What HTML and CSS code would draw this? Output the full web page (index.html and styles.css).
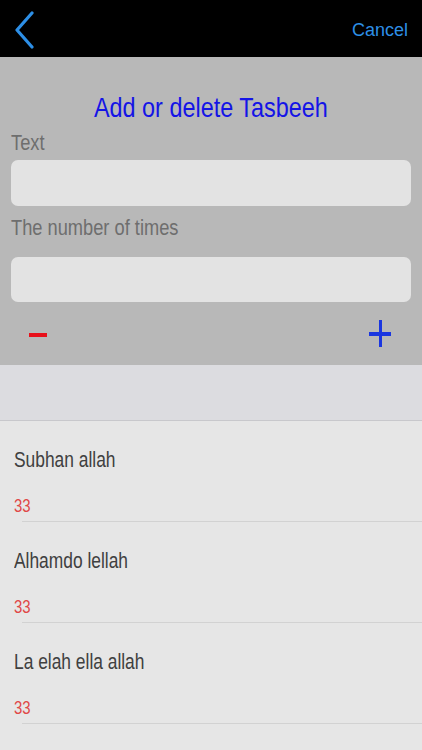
FILE: index.html
```
<!DOCTYPE html>
<html>
<head>
<meta charset="utf-8">
<link rel="stylesheet" href="styles.css">
</head>
<body>
<header class="nav">
  <svg class="back" width="24" height="40" viewBox="0 0 24 40"><path d="M19 2 L4 19 L19 36" fill="none" stroke="#2d8fe6" stroke-width="3.2" stroke-linecap="round" stroke-linejoin="round"/></svg>
  <span class="cancel">Cancel</span>
</header>
<section class="panel">
  <h1 class="title"><span class="narrow center">Add or delete Tasbeeh</span></h1>
  <label class="label"><span class="narrow">Text</span></label>
  <div class="input"></div>
  <label class="label label2"><span class="narrow">The number of times</span></label>
  <div class="input input2"></div>
  <div class="actions">
    <span class="minus"></span>
    <span class="plus"></span>
  </div>
</section>
<div class="band"></div>
<ul class="list">
  <li class="row"><div class="name"><span class="narrow tight">Subhan allah</span></div><div class="count"><span class="narrow">33</span></div></li>
  <li class="row"><div class="name"><span class="narrow tight">Alhamdo lellah</span></div><div class="count"><span class="narrow">33</span></div></li>
  <li class="row"><div class="name"><span class="narrow tight">La elah ella allah</span></div><div class="count"><span class="narrow">33</span></div></li>
</ul>
</body>
</html>
```
FILE: styles.css
```
html, body { margin: 0; padding: 0; }
body {
  width: 422px;
  height: 750px;
  overflow: hidden;
  background: #e6e6e6;
  font-family: "Liberation Sans", Arial, sans-serif;
}
.narrow {
  display: inline-block;
  transform: scaleX(0.83);
  transform-origin: left center;
  white-space: nowrap;
}
.narrow.center { transform-origin: center center; transform: scaleX(0.836); }
.narrow.tight { transform: scaleX(0.79); }
.nav {
  height: 57px;
  background: #000;
  display: flex;
  align-items: center;
  justify-content: space-between;
  padding: 0 14px 0 13px;
  box-sizing: border-box;
}
.back { display: block; margin-top: 4px; }
.cancel {
  color: #2d8fe6;
  font-size: 18px;
  margin-top: 4px;
}
.panel {
  background: #b8b8b8;
  height: 308px;
  padding: 34px 11px 0;
  box-sizing: border-box;
  display: flex;
  flex-direction: column;
}
.title {
  margin: 0;
  text-align: center;
  color: #1414e6;
  font-weight: normal;
  font-size: 28px;
  line-height: 34px;
}
.label {
  display: block;
  color: #6e6e6e;
  font-size: 22px;
  line-height: 26px;
  margin-top: 5px;
}
.input {
  height: 46px;
  background: #e3e3e3;
  border-radius: 7px;
  margin-top: 4px;
}
.label2 { margin-top: 9px; }
.input2 { margin-top: 16px; height: 45px; }
.actions {
  flex: 1;
  display: flex;
  align-items: center;
  justify-content: space-between;
  padding: 0 20px 0 18px;
}
.minus {
  display: block;
  width: 18px;
  height: 4px;
  background: #e8101a;
  margin-top: 2px;
}
.plus {
  position: relative;
  display: block;
  width: 22px;
  height: 27px;
}
.plus::before, .plus::after {
  content: "";
  position: absolute;
  background: #1a36e0;
}
.plus::before { left: 0; right: 0; top: 12px; height: 3.5px; }
.plus::after { top: 0; bottom: 0; left: 9.5px; width: 3.5px; }
.band {
  height: 55px;
  background: #dcdce0;
  border-bottom: 1px solid #c8c8cc;
}
.list {
  list-style: none;
  margin: 0;
  padding: 0 0 0 22px;
}
.row {
  height: 100px;
  border-bottom: 1px solid #d2d2d2;
}
.name {
  color: #404040;
  font-size: 22px;
  line-height: 26px;
  padding-top: 26px;
  margin-left: -8px;
}
.count {
  color: #e04848;
  font-size: 18px;
  line-height: 22px;
  margin-top: 22px;
  margin-left: -8px;
}
```
